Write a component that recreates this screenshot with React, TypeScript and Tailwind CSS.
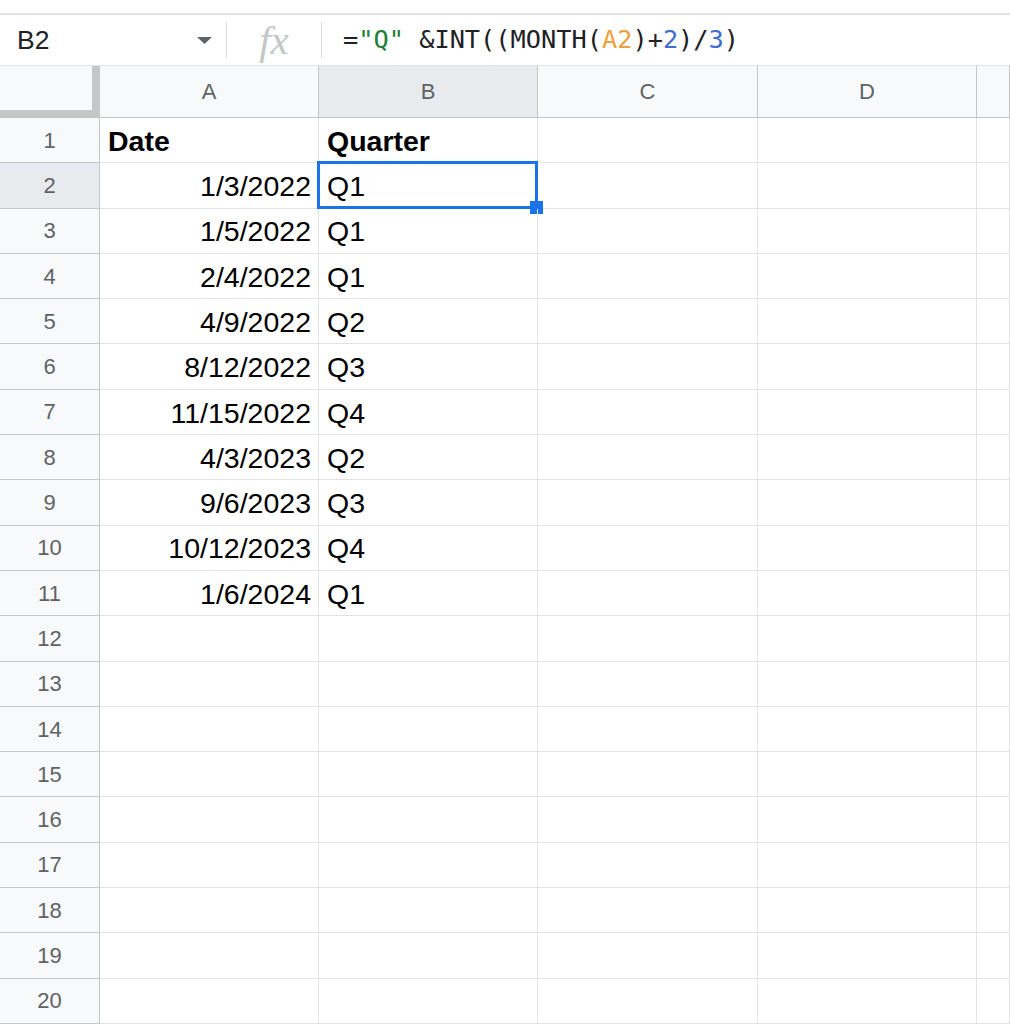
import React from 'react';

const rows: [string, string][] = [
  ['1/3/2022', 'Q1'],
  ['1/5/2022', 'Q1'],
  ['2/4/2022', 'Q1'],
  ['4/9/2022', 'Q2'],
  ['8/12/2022', 'Q3'],
  ['11/15/2022', 'Q4'],
  ['4/3/2023', 'Q2'],
  ['9/6/2023', 'Q3'],
  ['10/12/2023', 'Q4'],
  ['1/6/2024', 'Q1'],
];

const grid = 'grid grid-cols-[100px_219px_219px_220px_219px_1fr]';
const sans = { fontFamily: '"Liberation Sans", Arial, sans-serif' };

function FormulaBar() {
  return (
    <div className="flex h-[53px] items-center border-t-2 border-b border-[#e1e3e6] bg-white">
      {/* Name box */}
      <div className="flex w-[226px] items-center pl-[17px] pr-[14px]">
        <span className="text-[26.5px] leading-none text-[#202124]" style={sans}>
          B2
        </span>
        <svg className="ml-auto" width="15" height="7" viewBox="0 0 15 7">
          <path d="M0 0 L15 0 L7.5 7 Z" fill="#5f6368" />
        </svg>
      </div>
      <div className="h-[36px] w-px bg-[#dadce0]" />
      <div className="flex w-[94px] items-center justify-center">
        <span
          className="text-[41px] italic leading-none text-[#c4c7c5]"
          style={{ fontFamily: '"Liberation Serif", "Times New Roman", serif' }}
        >
          fx
        </span>
      </div>
      <div className="h-[36px] w-px bg-[#dadce0]" />
      <div
        className="pl-[21px] text-[25.3px] leading-none text-[#202124]"
        style={{ fontFamily: '"DejaVu Sans Mono", "Liberation Mono", monospace' }}
      >
        =<span className="text-[#188038]">"Q"</span> &amp;INT((MONTH(
        <span className="text-[#eda03c]">A2</span>)+
        <span className="text-[#3c6fd0]">2</span>)/
        <span className="text-[#3c6fd0]">3</span>)
      </div>
    </div>
  );
}

function HeaderRow() {
  const cols = ['A', 'B', 'C', 'D'];
  return (
    <div className={`${grid} h-[52px] border-b border-[#c4c7c5] bg-[#f8f9fa]`}>
      <div className="border-r-[8px] border-b-[7px] border-[#c4c7c5] bg-[#f8f9fa]" />
      {cols.map((c) => (
        <div
          key={c}
          className={`flex items-center justify-center border-r border-[#c4c7c5] text-[22px] text-[#5f6368] ${
            c === 'B' ? 'bg-[#e8eaed]' : ''
          }`}
          style={sans}
        >
          {c}
        </div>
      ))}
      <div className="border-r border-[#c4c7c5]" />
    </div>
  );
}

function Row({ n, a, b, bold }: { n: number; a?: string; b?: string; bold?: boolean }) {
  const selected = n === 2;
  const cell = 'flex items-end pb-[7px] border-r border-b border-[#e2e3e3] text-[28.5px] leading-none text-black';
  return (
    <div className={`${grid} h-[45.3px]`}>
      <div
        className={`flex items-center justify-center border-r border-b border-[#c4c7c5] text-[22px] text-[#5f6368] ${
          selected ? 'bg-[#e8eaed]' : 'bg-[#f8f9fa]'
        }`}
        style={sans}
      >
        {n}
      </div>
      <div className={`${cell} ${bold ? 'justify-start pl-[8px] font-bold' : 'justify-end pr-[7px]'}`} style={sans}>
        {a}
      </div>
      <div className={`${cell} relative pl-[8px] ${bold ? 'font-bold' : ''}`} style={sans}>
        {b}
        {selected && (
          <>
            <div className="absolute -top-[2px] -left-[2px] -right-px -bottom-px border-[3px] border-[#1a73e8]" />
            <div className="absolute -right-[6px] -bottom-[6px] h-[13px] w-[13px] bg-[#1a73e8]" />
          </>
        )}
      </div>
      <div className={cell} />
      <div className={cell} />
      <div className={cell} />
    </div>
  );
}

export default function App() {
  return (
    <div className="h-[1024px] w-[1010px] overflow-hidden bg-white">
      <div className="h-[13px]" />
      <FormulaBar />
      <HeaderRow />
      <Row n={1} a="Date" b="Quarter" bold />
      {rows.map(([a, b], i) => (
        <Row key={i} n={i + 2} a={a} b={b} />
      ))}
      {Array.from({ length: 9 }, (_, i) => (
        <Row key={`e${i}`} n={i + 12} />
      ))}
    </div>
  );
}
